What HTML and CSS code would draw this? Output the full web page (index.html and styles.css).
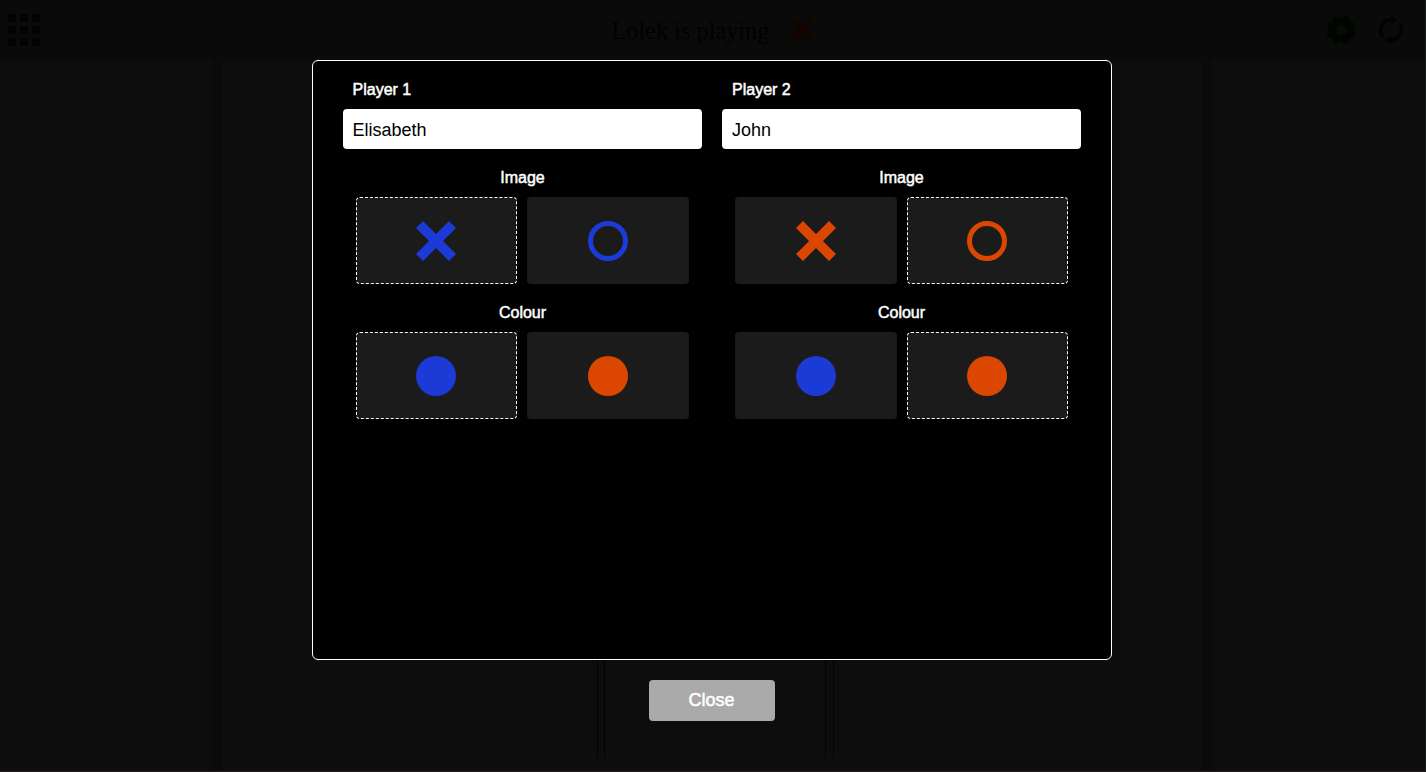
FILE: index.html
```html
<!DOCTYPE html>
<html lang="en">
<head>
<meta charset="utf-8">
<title>Noughts and Crosses</title>
<link rel="stylesheet" href="styles.css">
</head>
<body>
<div class="game">
  <header class="topbar">
    <svg class="menu-icon" width="32" height="32" viewBox="0 0 32 32"><path d="M0 0h8v8H0zM12 0h8v8h-8zM24 0h8v8h-8zM0 12h8v8H0zM12 12h8v8h-8zM24 12h8v8h-8zM0 24h8v8H0zM12 24h8v8h-8zM24 24h8v8h-8z"/></svg>
    <div class="status"><span class="status-text">Lolek is playing</span>
      <svg class="status-mark" width="24" height="24" viewBox="0 0 40 40"><path d="M7 0 20 13 33 0l7 7-13 13 13 13-7 7-13-13L7 40l-7-7 13-13L0 7z"/></svg>
    </div>
    <div class="tools">
      <svg width="30" height="30" viewBox="-15 -15 30 30"><path fill-rule="evenodd" d="M-3.5-14.3-7.9-12.4-8.1-9.2-9.2-8.1-12.4-7.9-14.3-3.5-12.1-1V1L-14.3 3.5-12.4 7.9-9.2 8.1-8.1 9.2-7.9 12.4-3.5 14.3-1 12.1H1L3.5 14.3 7.9 12.4 8.1 9.2 9.2 8.1 12.4 7.9 14.3 3.5 12.1 1V-1L14.3-3.5 12.4-7.9 9.2-8.1 8.1-9.2 7.9-12.4 3.5-14.3 1-12.1H-1ZM5 0A5 5 0 1 1-5 0 5 5 0 1 1 5 0Z"/></svg>
      <svg width="30" height="30" viewBox="-15 -15 30 30"><path d="M0-14.5 7-10-.5-5.7-.2-8.4A8.4 8.4 0 0 0-6.4 5.4L-9.2 8.2A12.3 12.3 0 0 1-.2-12.2ZM0 14.5-7 10 .5 5.7.2 8.4A8.4 8.4 0 0 0 6.4-5.4L9.2-8.2A12.3 12.3 0 0 1 .2 12.2Z"/></svg>
    </div>
  </header>
  <main class="arena">
    <div class="side"></div>
    <div class="board"><div class="cell"></div><div class="cell cell-mid"></div><div class="cell"></div></div>
    <div class="side"></div>
  </main>
</div>

<div class="overlay">
  <section class="dialog">
    <div class="player blue">
      <label class="name-label" for="p1">Player 1</label>
      <input class="name" id="p1" value="Elisabeth">
      <h2 class="caption">Image</h2>
      <div class="choices">
        <div class="choice selected"><svg width="40" height="40" viewBox="0 0 40 40"><path d="M7 0 20 13 33 0l7 7-13 13 13 13-7 7-13-13L7 40l-7-7 13-13L0 7z"/></svg></div>
        <div class="choice"><span class="ring"></span></div>
      </div>
      <h2 class="caption">Colour</h2>
      <div class="choices">
        <div class="choice selected"><span class="disc disc-blue"></span></div>
        <div class="choice"><span class="disc disc-orange"></span></div>
      </div>
    </div>
    <div class="player orange">
      <label class="name-label" for="p2">Player 2</label>
      <input class="name" id="p2" value="John">
      <h2 class="caption">Image</h2>
      <div class="choices">
        <div class="choice"><svg width="40" height="40" viewBox="0 0 40 40"><path d="M7 0 20 13 33 0l7 7-13 13 13 13-7 7-13-13L7 40l-7-7 13-13L0 7z"/></svg></div>
        <div class="choice selected"><span class="ring"></span></div>
      </div>
      <h2 class="caption">Colour</h2>
      <div class="choices">
        <div class="choice"><span class="disc disc-blue"></span></div>
        <div class="choice selected"><span class="disc disc-orange"></span></div>
      </div>
    </div>
  </section>
  <button class="close">Close</button>
</div>
</body>
</html>
```
FILE: styles.css
```css
* { box-sizing: border-box; }
body { margin: 0; height: 772px; overflow: hidden; background: #0a0a0a; font-family: "Liberation Sans", Arial, sans-serif; }
svg { display: block; flex: none; }

.game { height: 772px; display: flex; flex-direction: column; border-right: 1px solid #1b1f1e; border-bottom: 1px solid #231f20; }
.topbar { height: 60px; flex: none; display: grid; grid-template-columns: 1fr auto 1fr; align-items: center; padding: 0 8px; fill: #000500; }
.status { display: flex; align-items: center; gap: 20px; }
.status-text { font: 24.3px/30px "Liberation Serif", serif; color: #010101; white-space: nowrap; width: 158px; padding-top: 1px; }
.status-mark { fill: #140400; }
.tools { display: flex; gap: 20px; justify-content: flex-end; padding-right: 11px; }
.arena { flex: 1; display: grid; grid-template-columns: 212px 980px 1fr; column-gap: 10px; }
.side { background: #0d0d0d; }
.board { background: #0d0d0d; display: grid; grid-template-columns: 376px 222px 1fr; column-gap: 6px; padding-bottom: 12px; }
.cell { border-right: 1px solid #030303; }
.cell + .cell { border-left: 1px solid #030303; }
.cell:last-child { margin-left: 1px; border-right: 0; }

.overlay { position: absolute; top: 60px; left: 312px; width: 800px; display: flex; flex-direction: column; align-items: center; }
.dialog { width: 800px; height: 600px; background: #000; border: 1px solid #fff; border-radius: 6px; padding: 19px 30px; display: grid; grid-template-columns: 359px 359px; column-gap: 20px; align-items: start; }
.player { display: flex; flex-direction: column; }
.name-label, .caption, .close { color: #fff; font-weight: 400; -webkit-text-stroke: .5px #fff; }
.name-label { font-size: 16px; line-height: 20px; padding-left: 9.5px; margin-bottom: 9px; }
.name { height: 40px; border: 0; border-radius: 4px; padding: 2px 10px 0 9.5px; background: #fff; color: #000; font: 18px "Liberation Sans", Arial, sans-serif; }
.orange .name-label, .orange .name { padding-left: 10px; }
.caption { font-size: 16px; line-height: 20px; text-align: center; margin: 19px 0 9px; }
.choices { display: grid; grid-template-columns: 161px 162px; column-gap: 10px; padding: 0 13px; }
.orange .choices { grid-template-columns: 162px 161px; }
.choice { height: 87px; border-radius: 4px; background: #1b1b1b; display: flex; align-items: center; justify-content: center; border: 1px solid transparent; }
.selected { border: 1px dashed #fff; padding-right: 1px; }
.ring { width: 40px; height: 40px; border-radius: 50%; border: 5px solid currentColor; }
.disc { width: 40px; height: 40px; border-radius: 50%; }
.disc-blue { background: #1b3ad6; }
.disc-orange { background: #db4600; }
.blue { color: #1b3ad6; fill: #1b3ad6; }
.orange { color: #db4600; fill: #db4600; }
.close { margin-top: 20px; width: 126px; height: 41px; border: 0; border-radius: 4px; background: #aaa; padding: 0 1px 0 0; font: 18px "Liberation Sans", Arial, sans-serif; }
```
